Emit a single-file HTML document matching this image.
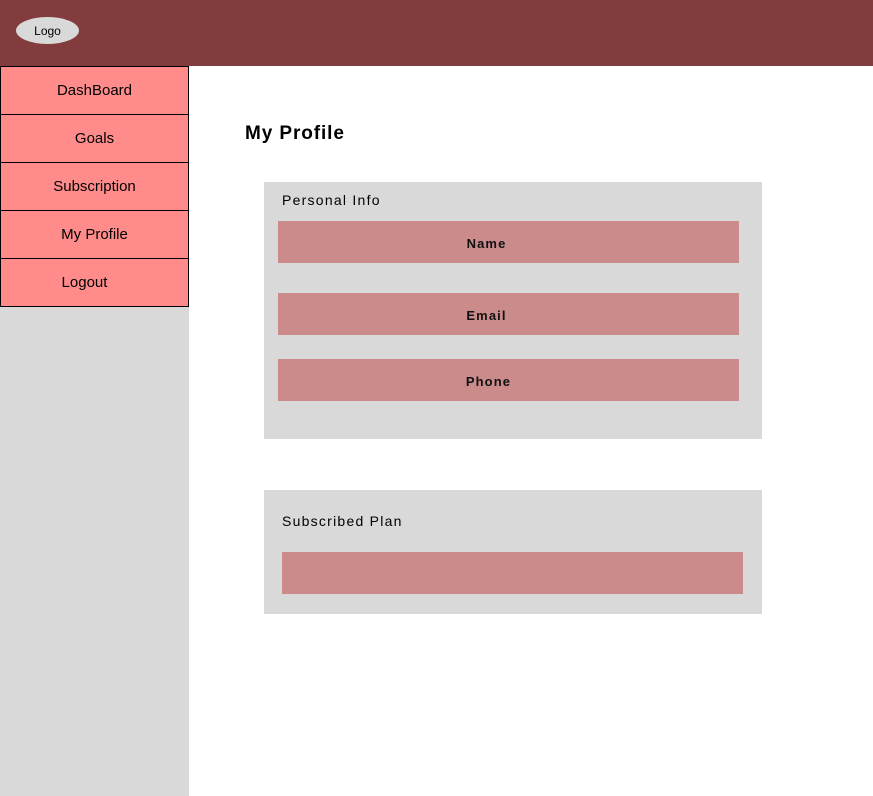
<!DOCTYPE html>
<html><head><style>
*{margin:0;padding:0;box-sizing:border-box}
body{width:873px;height:796px;position:relative;font-family:"Liberation Sans",sans-serif;background:#fff;overflow:hidden}
.top{position:absolute;left:0;top:0;width:873px;height:66px;background:#833c3d}
.logo{position:absolute;left:16px;top:17px;width:63px;height:27px;border-radius:50%;background:#d9d9d9;font-size:12px;text-align:center;line-height:29px}
.side{position:absolute;left:0;top:66px;width:189px;height:730px;background:#d9d9d9}
.nav{position:absolute;left:0;width:189px;height:49px;background:#ff8b8b;border:1px solid #000;font-size:15px;text-align:center;line-height:47px}
h1{position:absolute;left:245px;top:123px;font-size:19px;font-weight:bold;letter-spacing:0.9px}
.card{position:absolute;left:264px;width:498px;background:#d9d9d9}
.lbl{position:absolute;font-size:14px;letter-spacing:1.25px}
.f{position:absolute;background:#cb8b8b;font-size:13px;font-weight:bold;letter-spacing:1.1px;text-align:center;line-height:45px;color:#111}
</style></head><body>
<div class="top"><div class="logo">Logo</div></div>
<div class="side"></div>
<div class="nav" style="top:66px">DashBoard</div>
<div class="nav" style="top:114px">Goals</div>
<div class="nav" style="top:162px">Subscription</div>
<div class="nav" style="top:210px">My Profile</div>
<div class="nav" style="top:258px;text-indent:-20px">Logout</div>
<h1>My Profile</h1>
<div class="card" style="top:182px;height:257px">
<div class="lbl" style="left:18px;top:10px">Personal Info</div>
<div class="f" style="left:14px;top:39px;width:461px;height:42px;text-indent:-44px">Name</div>
<div class="f" style="left:14px;top:111px;width:461px;height:42px;text-indent:-44px">Email</div>
<div class="f" style="left:14px;top:177px;width:461px;height:42px;text-indent:-40px">Phone</div>
</div>
<div class="card" style="top:490px;height:124px">
<div class="lbl" style="left:18px;top:23px">Subscribed Plan</div>
<div class="f" style="left:18px;top:62px;width:461px;height:42px"></div>
</div>
</body></html>
